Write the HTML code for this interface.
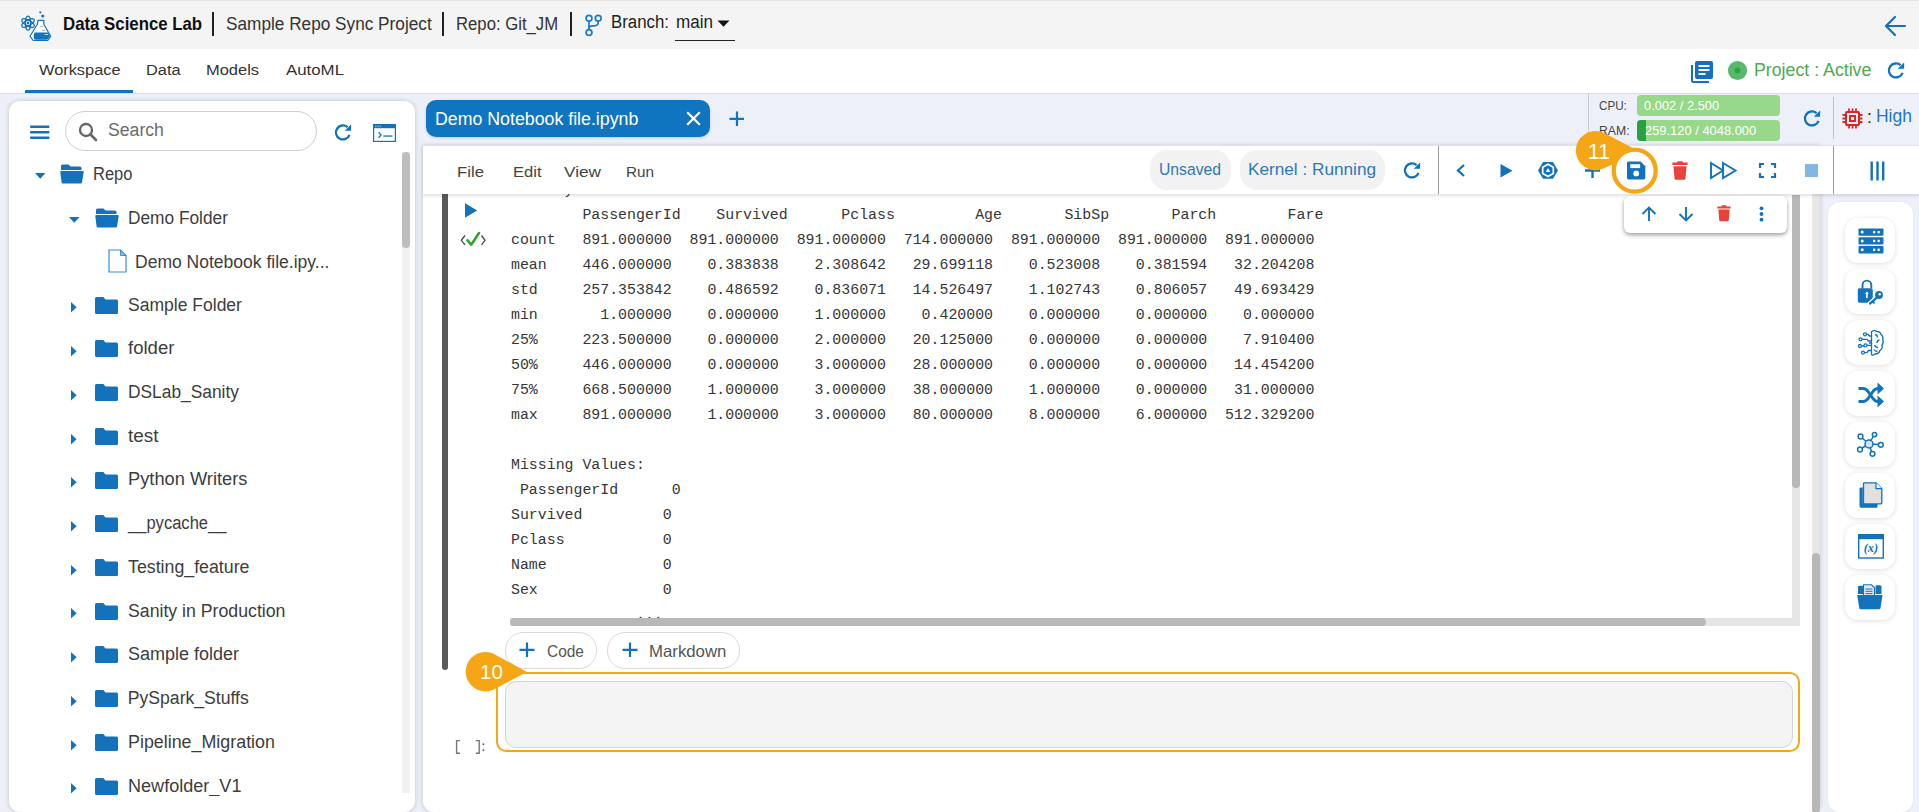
<!DOCTYPE html>
<html><head><meta charset="utf-8">
<style>
*{box-sizing:border-box;margin:0;padding:0}
html,body{width:1919px;height:812px;overflow:hidden;background:#edf0f8;font-family:"Liberation Sans",sans-serif;color:#222}
.a{position:absolute}
svg{display:block;position:absolute;overflow:visible}
.t{position:absolute;white-space:pre;line-height:1;transform-origin:0 0}
.mono{font-family:"Liberation Mono",monospace;color:#363636;white-space:pre;position:absolute;line-height:25px}
</style></head><body>
<div class="a" style="left:0px;top:0px;width:1919px;height:49px;background:#f4f4f4;border-top:1px solid #e4e4e4"></div>
<svg style="left:0;top:0" width="60" height="48" viewBox="0 0 60 48">
<g fill="none" stroke="#1272bb" stroke-width="1.25">
<ellipse cx="28" cy="23" rx="7" ry="2.7" transform="rotate(90 28 23)"/>
<ellipse cx="28" cy="23" rx="7" ry="2.7" transform="rotate(30 28 23)"/>
<ellipse cx="28" cy="23" rx="7" ry="2.7" transform="rotate(-30 28 23)"/>
</g>
<circle cx="28" cy="23" r="1.3" fill="#1272bb"/>
<path d="M38 20.3 H43.8 V24.2 L50.7 36.3 L47.8 40.5 H33.2 L30 36.3 L37.4 24.2 Z" fill="#fff" stroke="#1272bb" stroke-width="1.2" stroke-linejoin="round"/>
<path d="M34.6 32.4 H48 L50 36.3 L47.4 39.8 H34.6 Q32.8 37 34.6 32.4 Z" fill="#1272bb"/>
<path d="M40.5 26.5 H43 M42 30.3 H45" stroke="#8a8a8a" stroke-width="0.7"/><path d="M44.5 34.5 H48" stroke="#cfe3f5" stroke-width="0.9"/>
<circle cx="40.3" cy="12.3" r="1.1" fill="#1272bb"/><circle cx="42.8" cy="16" r="1.6" fill="#1272bb"/>
</svg>
<div class="t" style="left:63.0px;top:14.75px;font-size:18.02px;color:#111;font-weight:bold;transform:scaleX(0.9325);">Data Science Lab</div>
<div class="a" style="left:212px;top:12px;width:1.6px;height:24px;background:#222;"></div>
<div class="t" style="left:226.0px;top:14.75px;font-size:18.02px;color:#333;font-weight:normal;transform:scaleX(0.9553);">Sample Repo Sync Project</div>
<div class="a" style="left:442px;top:12px;width:1.6px;height:24px;background:#222;"></div>
<div class="t" style="left:455.5px;top:14.75px;font-size:18.02px;color:#333;font-weight:normal;transform:scaleX(0.9269);">Repo: Git_JM</div>
<div class="a" style="left:570px;top:12px;width:1.6px;height:24px;background:#222;"></div>
<svg style="left:584px;top:13px" width="20" height="26" viewBox="0 0 20 26">
<g fill="none" stroke="#1e7ac4" stroke-width="1.7">
<circle cx="5" cy="5.2" r="2.9"/><circle cx="14.2" cy="5.2" r="2.9"/><circle cx="5" cy="19.6" r="2.9"/>
<path d="M5 8.1 V16.7"/><path d="M14.2 8.1 V9.5 Q14.2 12.8 10.5 12.8 H8.5 Q5 12.8 5 16"/>
</g></svg>
<div class="t" style="left:611.0px;top:14.40px;font-size:17.60px;color:#222;font-weight:normal;transform:scaleX(0.9562);">Branch:</div>
<div class="t" style="left:675.5px;top:14.40px;font-size:17.60px;color:#222;font-weight:normal;transform:scaleX(0.9699);">main</div>
<svg style="left:717px;top:20px" width="13" height="7" viewBox="0 0 13 7"><path d="M0.5 0.5 H12.5 L6.5 6.8 Z" fill="#111"/></svg>
<div class="a" style="left:675px;top:39.5px;width:60px;height:1.6px;background:#222;"></div>
<svg style="left:1884px;top:15px" width="23" height="22" viewBox="0 0 23 22"><g fill="none" stroke="#1272bb" stroke-width="2.2" stroke-linecap="round" stroke-linejoin="round"><path d="M21 11 H2.5"/><path d="M11 2 L2 11 L11 20"/></g></svg>
<div class="a" style="left:0px;top:49px;width:1919px;height:45px;background:#fff;border-bottom:1px solid #dcdde4"></div>
<div class="t" style="left:38.6px;top:62.18px;font-size:15.50px;color:#333;font-weight:normal;transform:scaleX(1.0551);">Workspace</div>
<div class="t" style="left:145.8px;top:62.18px;font-size:15.50px;color:#333;font-weight:normal;transform:scaleX(1.0537);">Data</div>
<div class="t" style="left:206.4px;top:62.18px;font-size:15.50px;color:#333;font-weight:normal;transform:scaleX(1.0607);">Models</div>
<div class="t" style="left:285.8px;top:62.18px;font-size:15.50px;color:#333;font-weight:normal;transform:scaleX(1.0858);">AutoML</div>
<div class="a" style="left:25px;top:90px;width:108px;height:3px;background:#1272bb;"></div>
<svg style="left:1690px;top:60px" width="24" height="23" viewBox="0 0 24 23">
<path d="M2 5 V20.5 Q2 22 3.5 22 H19" fill="none" stroke="#1272bb" stroke-width="2"/>
<rect x="5" y="1" width="18" height="18" rx="2" fill="#1272bb"/>
<rect x="8.5" y="5" width="11" height="2" fill="#fff"/><rect x="8.5" y="9" width="11" height="2" fill="#fff"/><rect x="8.5" y="13" width="7" height="2" fill="#fff"/>
</svg>
<svg style="left:1727px;top:60px" width="21" height="21" viewBox="0 0 21 21"><circle cx="10.5" cy="10.5" r="9.6" fill="#58b86b"/><circle cx="10.5" cy="10.5" r="2.9" fill="#27a743"/></svg>
<div class="t" style="left:1754.0px;top:60.98px;font-size:18.58px;color:#4ea94f;font-weight:normal;transform:scaleX(0.9552);">Project : Active</div>
<svg style="left:1887px;top:62px" width="18" height="18" viewBox="0 0 18 18">
<path d="M15.54 10.8 A7 7 0 1 1 13.6 3.2" fill="none" stroke="#1272bb" stroke-width="2.3"/>
<path d="M17.1 0.6 V6.8 H10.8 Z" fill="#1272bb"/></svg>
<div class="a" style="left:9px;top:101px;width:406px;height:711px;background:#fff;border-radius:11px;box-shadow:0 0 4px 1px rgba(0,0,0,0.13)"></div>
<svg style="left:30px;top:125px" width="20" height="15" viewBox="0 0 20 15"><g fill="#1272bb"><rect x="0" y="0.5" width="19.5" height="2.6" rx="1"/><rect x="0" y="6" width="19.5" height="2.6" rx="1"/><rect x="0" y="11.5" width="19.5" height="2.6" rx="1"/></g></svg>
<div class="a" style="left:65px;top:111px;width:252px;height:40px;background:#fff;border:1px solid #cfcfcf;border-radius:20px"></div>
<svg style="left:78px;top:122px" width="20" height="20" viewBox="0 0 20 20"><circle cx="8" cy="8" r="6" fill="none" stroke="#666" stroke-width="2.3"/><path d="M12.5 12.5 L18 18" stroke="#666" stroke-width="2.6" stroke-linecap="round"/></svg>
<div class="t" style="left:107.7px;top:121.28px;font-size:18.58px;color:#6b6b6b;font-weight:normal;transform:scaleX(0.9503);">Search</div>
<svg style="left:334px;top:124px" width="18" height="18" viewBox="0 0 18 18">
<path d="M15.54 10.8 A7 7 0 1 1 13.6 3.2" fill="none" stroke="#1272bb" stroke-width="2.3"/>
<path d="M17.1 0.6 V6.8 H10.8 Z" fill="#1272bb"/></svg>
<svg style="left:373px;top:124px" width="23" height="18" viewBox="0 0 23 18">
<rect x="0.6" y="0.6" width="21.8" height="16.8" fill="none" stroke="#1272bb" stroke-width="1.2"/>
<rect x="0.6" y="0.6" width="21.8" height="3.6" fill="#1272bb"/>
<g fill="#8ec4f0"><rect x="2.2" y="1.7" width="1.2" height="1.4"/><rect x="4.4" y="1.7" width="1.2" height="1.4"/><rect x="6.6" y="1.7" width="1.2" height="1.4"/></g>
<path d="M5.6 8.2 L8 11 L5.6 13.8" fill="none" stroke="#1272bb" stroke-width="1.3"/><rect x="10.3" y="11.4" width="9.2" height="1.3" fill="#1272bb"/>
</svg>
<div class="a" style="left:402px;top:152px;width:8px;height:641px;background:#f1f1f1;"></div>
<div class="a" style="left:402px;top:152px;width:8px;height:96px;background:#bdbdbd;border-radius:4px"></div>
<svg style="left:34.5px;top:172.5px" width="11" height="6" viewBox="0 0 11 6"><path d="M0 0 H10.5 L5.25 5.8 Z" fill="#1272bb"/></svg>
<svg style="left:59.5px;top:164px" width="24" height="20" viewBox="0 0 24 20">
<path d="M1 2 Q1 0.5 2.5 0.5 H8.5 L10.5 2.5 H20 Q21.5 2.5 21.5 4 V6 H1 Z" fill="#1272bb"/>
<path d="M0.3 8 Q0.2 7 1.3 7 H22.7 Q23.8 7 23.7 8 L22 18.5 Q21.8 19.6 20.7 19.6 H2.8 Q1.7 19.6 1.6 18.5 Z" fill="#1272bb"/>
</svg>
<div class="t" style="left:93.3px;top:165.90px;font-size:17.60px;color:#3d3d3d;font-weight:normal;transform:scaleX(0.9387);">Repo</div>
<svg style="left:69px;top:216.5px" width="11" height="6" viewBox="0 0 11 6"><path d="M0 0 H10.5 L5.25 5.8 Z" fill="#1272bb"/></svg>
<svg style="left:94.5px;top:208px" width="24" height="20" viewBox="0 0 24 20">
<path d="M1 2 Q1 0.5 2.5 0.5 H8.5 L10.5 2.5 H20 Q21.5 2.5 21.5 4 V6 H1 Z" fill="#1272bb"/>
<path d="M0.3 8 Q0.2 7 1.3 7 H22.7 Q23.8 7 23.7 8 L22 18.5 Q21.8 19.6 20.7 19.6 H2.8 Q1.7 19.6 1.6 18.5 Z" fill="#1272bb"/>
</svg>
<div class="t" style="left:128.3px;top:209.90px;font-size:17.60px;color:#3d3d3d;font-weight:normal;transform:scaleX(0.9830);">Demo Folder</div>
<svg style="left:108px;top:249px" width="19" height="24" viewBox="0 0 19 24">
<path d="M1 1 H12.5 L18 6.5 V23 H1 Z" fill="#fff" stroke="#3a8fd6" stroke-width="1.2"/>
<path d="M12.5 1 V6.5 H18 Z" fill="#8cc0ec" stroke="#3a8fd6" stroke-width="1"/></svg>
<div class="t" style="left:134.7px;top:253.70px;font-size:17.60px;color:#3d3d3d;font-weight:normal;transform:scaleX(0.9957);">Demo Notebook file.ipy...</div>
<svg style="left:70.8px;top:302.4px" width="6" height="11" viewBox="0 0 6 11"><path d="M0 0 V10.5 L5.6 5.25 Z" fill="#1272bb"/></svg>
<svg style="left:94.8px;top:296.6px" width="23" height="17" viewBox="0 0 23 17">
<path d="M0 1.5 Q0 0 1.5 0 H8.3 L10.5 2.4 H21.5 Q23 2.4 23 3.9 V15.5 Q23 17 21.5 17 H1.5 Q0 17 0 15.5 Z" fill="#1272bb"/>
</svg>
<div class="t" style="left:127.8px;top:296.50px;font-size:17.60px;color:#3d3d3d;font-weight:normal;transform:scaleX(0.9960);">Sample Folder</div>
<svg style="left:70.8px;top:346.1272727272727px" width="6" height="11" viewBox="0 0 6 11"><path d="M0 0 V10.5 L5.6 5.25 Z" fill="#1272bb"/></svg>
<svg style="left:94.8px;top:340.32727272727277px" width="23" height="17" viewBox="0 0 23 17">
<path d="M0 1.5 Q0 0 1.5 0 H8.3 L10.5 2.4 H21.5 Q23 2.4 23 3.9 V15.5 Q23 17 21.5 17 H1.5 Q0 17 0 15.5 Z" fill="#1272bb"/>
</svg>
<div class="t" style="left:127.8px;top:340.23px;font-size:17.60px;color:#3d3d3d;font-weight:normal;transform:scaleX(1.0561);">folder</div>
<svg style="left:70.8px;top:389.8545454545454px" width="6" height="11" viewBox="0 0 6 11"><path d="M0 0 V10.5 L5.6 5.25 Z" fill="#1272bb"/></svg>
<svg style="left:94.8px;top:384.05454545454546px" width="23" height="17" viewBox="0 0 23 17">
<path d="M0 1.5 Q0 0 1.5 0 H8.3 L10.5 2.4 H21.5 Q23 2.4 23 3.9 V15.5 Q23 17 21.5 17 H1.5 Q0 17 0 15.5 Z" fill="#1272bb"/>
</svg>
<div class="t" style="left:127.8px;top:383.96px;font-size:17.60px;color:#3d3d3d;font-weight:normal;transform:scaleX(0.9864);">DSLab_Sanity</div>
<svg style="left:70.8px;top:433.58181818181816px" width="6" height="11" viewBox="0 0 6 11"><path d="M0 0 V10.5 L5.6 5.25 Z" fill="#1272bb"/></svg>
<svg style="left:94.8px;top:427.7818181818182px" width="23" height="17" viewBox="0 0 23 17">
<path d="M0 1.5 Q0 0 1.5 0 H8.3 L10.5 2.4 H21.5 Q23 2.4 23 3.9 V15.5 Q23 17 21.5 17 H1.5 Q0 17 0 15.5 Z" fill="#1272bb"/>
</svg>
<div class="t" style="left:127.8px;top:427.69px;font-size:17.60px;color:#3d3d3d;font-weight:normal;transform:scaleX(1.0751);">test</div>
<svg style="left:70.8px;top:477.30909090909086px" width="6" height="11" viewBox="0 0 6 11"><path d="M0 0 V10.5 L5.6 5.25 Z" fill="#1272bb"/></svg>
<svg style="left:94.8px;top:471.5090909090909px" width="23" height="17" viewBox="0 0 23 17">
<path d="M0 1.5 Q0 0 1.5 0 H8.3 L10.5 2.4 H21.5 Q23 2.4 23 3.9 V15.5 Q23 17 21.5 17 H1.5 Q0 17 0 15.5 Z" fill="#1272bb"/>
</svg>
<div class="t" style="left:127.8px;top:471.41px;font-size:17.60px;color:#3d3d3d;font-weight:normal;transform:scaleX(1.0383);">Python Writers</div>
<svg style="left:70.8px;top:521.0363636363636px" width="6" height="11" viewBox="0 0 6 11"><path d="M0 0 V10.5 L5.6 5.25 Z" fill="#1272bb"/></svg>
<svg style="left:94.8px;top:515.2363636363636px" width="23" height="17" viewBox="0 0 23 17">
<path d="M0 1.5 Q0 0 1.5 0 H8.3 L10.5 2.4 H21.5 Q23 2.4 23 3.9 V15.5 Q23 17 21.5 17 H1.5 Q0 17 0 15.5 Z" fill="#1272bb"/>
</svg>
<div class="t" style="left:127.8px;top:515.14px;font-size:17.60px;color:#3d3d3d;font-weight:normal;transform:scaleX(0.9407);">__pycache__</div>
<svg style="left:70.8px;top:564.7636363636364px" width="6" height="11" viewBox="0 0 6 11"><path d="M0 0 V10.5 L5.6 5.25 Z" fill="#1272bb"/></svg>
<svg style="left:94.8px;top:558.9636363636364px" width="23" height="17" viewBox="0 0 23 17">
<path d="M0 1.5 Q0 0 1.5 0 H8.3 L10.5 2.4 H21.5 Q23 2.4 23 3.9 V15.5 Q23 17 21.5 17 H1.5 Q0 17 0 15.5 Z" fill="#1272bb"/>
</svg>
<div class="t" style="left:127.8px;top:558.87px;font-size:17.60px;color:#3d3d3d;font-weight:normal;transform:scaleX(1.0095);">Testing_feature</div>
<svg style="left:70.8px;top:608.490909090909px" width="6" height="11" viewBox="0 0 6 11"><path d="M0 0 V10.5 L5.6 5.25 Z" fill="#1272bb"/></svg>
<svg style="left:94.8px;top:602.690909090909px" width="23" height="17" viewBox="0 0 23 17">
<path d="M0 1.5 Q0 0 1.5 0 H8.3 L10.5 2.4 H21.5 Q23 2.4 23 3.9 V15.5 Q23 17 21.5 17 H1.5 Q0 17 0 15.5 Z" fill="#1272bb"/>
</svg>
<div class="t" style="left:127.8px;top:602.59px;font-size:17.60px;color:#3d3d3d;font-weight:normal;transform:scaleX(1.0061);">Sanity in Production</div>
<svg style="left:70.8px;top:652.2181818181817px" width="6" height="11" viewBox="0 0 6 11"><path d="M0 0 V10.5 L5.6 5.25 Z" fill="#1272bb"/></svg>
<svg style="left:94.8px;top:646.4181818181818px" width="23" height="17" viewBox="0 0 23 17">
<path d="M0 1.5 Q0 0 1.5 0 H8.3 L10.5 2.4 H21.5 Q23 2.4 23 3.9 V15.5 Q23 17 21.5 17 H1.5 Q0 17 0 15.5 Z" fill="#1272bb"/>
</svg>
<div class="t" style="left:127.8px;top:646.32px;font-size:17.60px;color:#3d3d3d;font-weight:normal;transform:scaleX(1.0221);">Sample folder</div>
<svg style="left:70.8px;top:695.9454545454545px" width="6" height="11" viewBox="0 0 6 11"><path d="M0 0 V10.5 L5.6 5.25 Z" fill="#1272bb"/></svg>
<svg style="left:94.8px;top:690.1454545454545px" width="23" height="17" viewBox="0 0 23 17">
<path d="M0 1.5 Q0 0 1.5 0 H8.3 L10.5 2.4 H21.5 Q23 2.4 23 3.9 V15.5 Q23 17 21.5 17 H1.5 Q0 17 0 15.5 Z" fill="#1272bb"/>
</svg>
<div class="t" style="left:127.8px;top:690.05px;font-size:17.60px;color:#3d3d3d;font-weight:normal;">PySpark_Stuffs</div>
<svg style="left:70.8px;top:739.6727272727272px" width="6" height="11" viewBox="0 0 6 11"><path d="M0 0 V10.5 L5.6 5.25 Z" fill="#1272bb"/></svg>
<svg style="left:94.8px;top:733.8727272727273px" width="23" height="17" viewBox="0 0 23 17">
<path d="M0 1.5 Q0 0 1.5 0 H8.3 L10.5 2.4 H21.5 Q23 2.4 23 3.9 V15.5 Q23 17 21.5 17 H1.5 Q0 17 0 15.5 Z" fill="#1272bb"/>
</svg>
<div class="t" style="left:127.8px;top:733.78px;font-size:17.60px;color:#3d3d3d;font-weight:normal;transform:scaleX(1.0151);">Pipeline_Migration</div>
<svg style="left:70.8px;top:783.4px" width="6" height="11" viewBox="0 0 6 11"><path d="M0 0 V10.5 L5.6 5.25 Z" fill="#1272bb"/></svg>
<svg style="left:94.8px;top:777.6px" width="23" height="17" viewBox="0 0 23 17">
<path d="M0 1.5 Q0 0 1.5 0 H8.3 L10.5 2.4 H21.5 Q23 2.4 23 3.9 V15.5 Q23 17 21.5 17 H1.5 Q0 17 0 15.5 Z" fill="#1272bb"/>
</svg>
<div class="t" style="left:127.8px;top:777.50px;font-size:17.60px;color:#3d3d3d;font-weight:normal;transform:scaleX(1.0266);">Newfolder_V1</div>
<div class="a" style="left:20px;top:796px;width:380px;height:16px;background:#fff;"></div>
<div class="a" style="left:426px;top:100px;width:284px;height:37px;background:#1075c0;border-radius:10px;box-shadow:0 1px 3px rgba(0,0,0,0.15)"></div>
<div class="t" style="left:434.5px;top:110.28px;font-size:18.58px;color:#fff;font-weight:normal;transform:scaleX(0.9555);">Demo Notebook file.ipynb</div>
<svg style="left:686px;top:111px" width="15" height="15" viewBox="0 0 15 15"><path d="M1.2 1.2 L13.8 13.8 M13.8 1.2 L1.2 13.8" stroke="#fff" stroke-width="2.2"/></svg>
<svg style="left:729px;top:111px" width="16" height="16" viewBox="0 0 16 16"><path d="M8 0.5 V15 M0.5 7.8 H15" stroke="#1272bb" stroke-width="2.2"/></svg>
<div class="a" style="left:1588px;top:93px;width:1px;height:52px;background:#c9c9d2;"></div>
<div class="t" style="left:1599.3px;top:99.29px;font-size:13.13px;color:#444;font-weight:normal;transform:scaleX(0.8850);">CPU:</div>
<div class="a" style="left:1637px;top:95px;width:143px;height:21px;background:#98d88a;border-radius:4px"></div>
<div class="t" style="left:1644.0px;top:99.09px;font-size:13.13px;color:#fff;font-weight:normal;transform:scaleX(0.9806);">0.002 / 2.500</div>
<div class="t" style="left:1599.3px;top:123.89px;font-size:13.13px;color:#444;font-weight:normal;transform:scaleX(0.9313);">RAM:</div>
<div class="a" style="left:1637px;top:120px;width:143px;height:21px;background:#98d88a;border-radius:4px"></div>
<div class="a" style="left:1637px;top:120px;width:9px;height:21px;background:#27a243;border-radius:4px 0 0 4px"></div>
<div class="t" style="left:1645.0px;top:123.89px;font-size:13.13px;color:#fff;font-weight:normal;transform:scaleX(0.9831);">259.120 / 4048.000</div>
<svg style="left:1803px;top:110px" width="18" height="18" viewBox="0 0 18 18">
<path d="M15.54 10.8 A7 7 0 1 1 13.6 3.2" fill="none" stroke="#1272bb" stroke-width="2.3"/>
<path d="M17.1 0.6 V6.8 H10.8 Z" fill="#1272bb"/></svg>
<div class="a" style="left:1833px;top:97px;width:1px;height:42px;background:#bfbfc8;"></div>
<svg style="left:1842px;top:108px" width="21" height="21" viewBox="0 0 21 21">
<g fill="none" stroke="#e02424" stroke-width="2"><rect x="4" y="4" width="13" height="13" rx="1"/><rect x="8" y="8" width="5" height="5"/></g>
<g stroke="#e02424" stroke-width="1.8"><path d="M7 0.5V4M10.5 0.5V4M14 0.5V4M7 17V20.5M10.5 17V20.5M14 17V20.5M0.5 7H4M0.5 10.5H4M0.5 14H4M17 7H20.5M17 10.5H20.5M17 14H20.5"/></g></svg>
<div class="t" style="left:1867.0px;top:108.60px;font-size:17.60px;color:#222;font-weight:normal;">:</div>
<div class="t" style="left:1875.8px;top:108.37px;font-size:17.88px;color:#1e78c4;font-weight:normal;transform:scaleX(0.9779);">High</div>
<div class="a" style="left:423px;top:146px;width:1397px;height:666px;background:#fff;border-radius:0 0 11px 11px;box-shadow:0 0 4px 1px rgba(0,0,0,0.13)"></div>
<div class="a" style="left:423px;top:145px;width:1496px;height:49px;background:#fff;border-top:1px solid #e2e2e2;box-shadow:0 2px 3px rgba(0,0,0,0.12);z-index:1"></div>
<div style="position:absolute;left:0;top:0;z-index:2">
<div class="t" style="left:457.0px;top:164.38px;font-size:15.50px;color:#444;font-weight:normal;transform:scaleX(1.0810);">File</div>
<div class="t" style="left:512.5px;top:164.38px;font-size:15.50px;color:#444;font-weight:normal;transform:scaleX(1.0670);">Edit</div>
<div class="t" style="left:564.0px;top:164.38px;font-size:15.50px;color:#444;font-weight:normal;transform:scaleX(1.1105);">View</div>
<div class="t" style="left:625.5px;top:164.38px;font-size:15.50px;color:#444;font-weight:normal;transform:scaleX(0.9847);">Run</div>
<div class="a" style="left:1150px;top:150px;width:81px;height:40px;background:#f2f2f2;border-radius:17px"></div>
<div class="t" style="left:1159.0px;top:161.82px;font-size:15.92px;color:#2f77b8;font-weight:normal;transform:scaleX(0.9880);">Unsaved</div>
<div class="a" style="left:1240px;top:150px;width:145px;height:40px;background:#f2f2f2;border-radius:17px"></div>
<div class="t" style="left:1248.0px;top:161.82px;font-size:15.92px;color:#2f77b8;font-weight:normal;transform:scaleX(1.0807);">Kernel : Running</div>
<svg style="left:1403px;top:162px" width="18" height="18" viewBox="0 0 18 18">
<path d="M15.54 10.8 A7 7 0 1 1 13.6 3.2" fill="none" stroke="#1272bb" stroke-width="2.3"/>
<path d="M17.1 0.6 V6.8 H10.8 Z" fill="#1272bb"/></svg>
<div class="a" style="left:1438px;top:146px;width:1px;height:48px;background:#9a9a9a;"></div>
<svg style="left:1455px;top:164px" width="11" height="13" viewBox="0 0 11 13"><path d="M9 1 L3 6.5 L9 12" fill="none" stroke="#1272bb" stroke-width="2.3"/></svg>
<svg style="left:1500px;top:164px" width="13" height="14" viewBox="0 0 13 14"><path d="M0.5 0 V13.5 L12.5 6.75 Z" fill="#1272bb"/></svg>
<svg style="left:1537px;top:161px" width="22" height="19" viewBox="0 0 22 19"><path d="M1 9.4 L6 1 H16 L21 9.4 L16 17.7 H6 Z" fill="#1272bb"/><path d="M11 3.3 L16.3 6.35 V12.45 L11 15.5 L5.7 12.45 V6.35 Z" fill="none" stroke="#fff" stroke-width="1.7"/><path d="M11 7.6 Q11.6 7.6 12 8.4 L13.2 11 H8.8 L10 8.4 Q10.4 7.6 11 7.6 Z" fill="#fff"/></svg>
<svg style="left:1585px;top:163px" width="15" height="15" viewBox="0 0 15 15"><path d="M7.5 0 V15 M0 7.5 H15" stroke="#1272bb" stroke-width="2.4"/></svg>
<svg style="left:1627px;top:161px" width="19" height="19" viewBox="0 0 19 19"><path d="M0 2 Q0 0.3 1.7 0.3 H14 L18.5 4.8 V17 Q18.5 18.7 16.8 18.7 H1.7 Q0 18.7 0 17 Z" fill="#1272bb"/><rect x="3.5" y="2.8" width="10" height="4" fill="#fff"/><circle cx="9.3" cy="12.5" r="2.8" fill="#fff"/></svg>
<svg style="left:1671.5px;top:160.5px" width="16" height="19" viewBox="0 0 16 19"><path d="M5.5 0.3 H10.5 L11 1.6 H15.6 V4 H0.4 V1.6 H5 Z" fill="#e8433a"/><path d="M1.5 5.2 H14.5 L13.5 17.5 Q13.4 18.7 12.2 18.7 H3.8 Q2.6 18.7 2.5 17.5 Z" fill="#e8433a"/></svg>
<svg style="left:1710px;top:162px" width="27" height="17" viewBox="0 0 27 17"><g fill="none" stroke="#1272bb" stroke-width="1.9" stroke-linejoin="miter"><path d="M1 1 L13 8.5 L1 16 Z"/><path d="M13 1 L25.5 8.5 L13 16 Z"/></g></svg>
<svg style="left:1759px;top:163px" width="17" height="15" viewBox="0 0 17 15"><g fill="none" stroke="#1272bb" stroke-width="2.2"><path d="M1 5 V1 H5"/><path d="M12 1 H16 V5"/><path d="M16 10 V14 H12"/><path d="M5 14 H1 V10"/></g></svg>
<div class="a" style="left:1805px;top:164px;width:13px;height:13px;background:#83b6e0;"></div>
<div class="a" style="left:1833px;top:146px;width:1px;height:48px;background:#9a9a9a;"></div>
<svg style="left:1870px;top:161px" width="15" height="20" viewBox="0 0 15 20"><g fill="#1272bb"><rect x="0.5" y="0.5" width="2.4" height="19"/><rect x="6.3" y="0.5" width="2.4" height="19"/><rect x="12" y="0.5" width="2.4" height="19"/></g></svg>
</div>
<div class="a" style="left:442px;top:190px;width:6px;height:480px;background:#5a5a5a;border-radius:0 0 3px 3px"></div>
<svg style="left:465px;top:203px" width="13" height="15" viewBox="0 0 13 15"><path d="M0 0.3 V14.7 L12.2 7.5 Z" fill="#1272bb"/></svg>
<svg style="left:460px;top:231px" width="27" height="16" viewBox="0 0 27 16"><path d="M5 4.5 L1.3 9.3 L5 13.8 M21.5 4.5 L25 9.3 L21.5 13.8" fill="none" stroke="#444" stroke-width="1.3"/><path d="M7.5 9.3 L11.3 13.6 L19 2" fill="none" stroke="#2ba52b" stroke-width="2.6" stroke-linecap="round" stroke-linejoin="round"/></svg>
<div class="mono" style="left:511px;top:178.03px;font-size:14.884px;z-index:0;height:449px;overflow:hidden">Summary Statistics:
        PassengerId    Survived      Pclass         Age       SibSp       Parch        Fare
count   891.000000  891.000000  891.000000  714.000000  891.000000  891.000000  891.000000
mean    446.000000    0.383838    2.308642   29.699118    0.523008    0.381594   32.204208
std     257.353842    0.486592    0.836071   14.526497    1.102743    0.806057   49.693429
min       1.000000    0.000000    1.000000    0.420000    0.000000    0.000000    0.000000
25%     223.500000    0.000000    2.000000   20.125000    0.000000    0.000000    7.910400
50%     446.000000    0.000000    3.000000   28.000000    0.000000    0.000000   14.454200
75%     668.500000    1.000000    3.000000   38.000000    1.000000    0.000000   31.000000
max     891.000000    1.000000    3.000000   80.000000    8.000000    6.000000  512.329200

Missing Values:
 PassengerId      0
Survived         0
Pclass           0
Name             0
Sex              0
              ...</div>
<div class="a" style="left:1792px;top:195px;width:8px;height:431px;background:#e6e6e6;"></div>
<div class="a" style="left:1792px;top:195px;width:8px;height:293px;background:#b8b8b8;border-radius:0 0 4px 4px"></div>
<div class="a" style="left:510px;top:618px;width:1290px;height:8px;background:#e6e6e6;"></div>
<div class="a" style="left:510px;top:618px;width:1196px;height:8px;background:#b8b8b8;border-radius:4px"></div>
<div class="a" style="left:1624px;top:196px;width:163px;height:37px;background:#fff;border-radius:6px;box-shadow:0 2px 4px rgba(0,0,0,0.38);z-index:3"></div>
<div style="position:absolute;left:0;top:0;z-index:4">
<svg style="left:1641px;top:206px" width="16" height="16" viewBox="0 0 16 16"><path d="M8 15 V1.5 M1.5 8 L8 1.5 L14.5 8" fill="none" stroke="#1272bb" stroke-width="1.9"/></svg>
<svg style="left:1678px;top:206px" width="16" height="16" viewBox="0 0 16 16"><path d="M8 1 V14.5 M1.5 8 L8 14.5 L14.5 8" fill="none" stroke="#1272bb" stroke-width="1.9"/></svg>
<svg style="left:1717px;top:205px" width="14" height="16.5" viewBox="0 0 16 19"><path d="M5.5 0.3 H10.5 L11 1.6 H15.6 V4 H0.4 V1.6 H5 Z" fill="#e8433a"/><path d="M1.5 5.2 H14.5 L13.5 17.5 Q13.4 18.7 12.2 18.7 H3.8 Q2.6 18.7 2.5 17.5 Z" fill="#e8433a"/></svg>
<svg style="left:1759px;top:206px" width="5" height="16" viewBox="0 0 5 16"><g fill="#1272bb"><circle cx="2.5" cy="2.3" r="1.9"/><circle cx="2.5" cy="8" r="1.9"/><circle cx="2.5" cy="13.7" r="1.9"/></g></svg>
</div>
<div class="a" style="left:505px;top:632px;width:92px;height:37px;background:#fff;border:1px solid #d9d9d9;border-radius:18px"></div>
<svg style="left:519px;top:642px" width="16" height="16" viewBox="0 0 16 16"><path d="M8 0.5 V15 M0.5 7.8 H15.5" stroke="#1272bb" stroke-width="2.2"/></svg>
<div class="t" style="left:546.6px;top:642.65px;font-size:16.48px;color:#555;font-weight:normal;transform:scaleX(0.9380);">Code</div>
<div class="a" style="left:607px;top:632px;width:133px;height:37px;background:#fff;border:1px solid #d9d9d9;border-radius:18px"></div>
<svg style="left:622px;top:642px" width="16" height="16" viewBox="0 0 16 16"><path d="M8 0.5 V15 M0.5 7.8 H15.5" stroke="#1272bb" stroke-width="2.2"/></svg>
<div class="t" style="left:649.0px;top:642.65px;font-size:16.48px;color:#555;font-weight:normal;transform:scaleX(1.0182);">Markdown</div>
<div class="a" style="left:496px;top:672px;width:1304px;height:80px;background:#fff;border:2.5px solid #f2a716;border-radius:10px"></div>
<div class="a" style="left:505px;top:681px;width:1288px;height:67px;background:#f4f4f4;border:1px solid #d4d4d4;border-radius:11px"></div>
<svg style="left:450px;top:736px" width="40" height="22" viewBox="450 736 40 22"><path d="M460 740.6 H456.6 V753.2 H460 M475.8 740.6 H479.2 V753.2 H475.8" fill="none" stroke="#777" stroke-width="1.4"/><circle cx="483.4" cy="744.2" r="1" fill="#666"/><circle cx="483.4" cy="750.3" r="1" fill="#666"/></svg>
<div class="a" style="left:1812px;top:146px;width:8px;height:666px;background:#e8e8e8;"></div>
<div class="a" style="left:1812px;top:553px;width:8px;height:260px;background:#b8b8b8;border-radius:4px"></div>
<div class="a" style="left:1828px;top:202px;width:85px;height:610px;background:#fff;border-radius:12px;box-shadow:0 0 2px rgba(0,0,0,0.08)"></div>
<div class="a" style="left:1845px;top:218px;width:50px;height:45px;background:#fff;border-radius:13px;box-shadow:0 1px 5px rgba(0,0,0,0.13)"></div>
<div class="a" style="left:1845px;top:269px;width:50px;height:45px;background:#fff;border-radius:13px;box-shadow:0 1px 5px rgba(0,0,0,0.13)"></div>
<div class="a" style="left:1845px;top:320px;width:50px;height:45px;background:#fff;border-radius:13px;box-shadow:0 1px 5px rgba(0,0,0,0.13)"></div>
<div class="a" style="left:1845px;top:371px;width:50px;height:45px;background:#fff;border-radius:13px;box-shadow:0 1px 5px rgba(0,0,0,0.13)"></div>
<div class="a" style="left:1845px;top:422px;width:50px;height:45px;background:#fff;border-radius:13px;box-shadow:0 1px 5px rgba(0,0,0,0.13)"></div>
<div class="a" style="left:1845px;top:473px;width:50px;height:45px;background:#fff;border-radius:13px;box-shadow:0 1px 5px rgba(0,0,0,0.13)"></div>
<div class="a" style="left:1845px;top:524px;width:50px;height:45px;background:#fff;border-radius:13px;box-shadow:0 1px 5px rgba(0,0,0,0.13)"></div>
<div class="a" style="left:1845px;top:575px;width:50px;height:45px;background:#fff;border-radius:13px;box-shadow:0 1px 5px rgba(0,0,0,0.13)"></div>
<svg style="left:1858px;top:228px" width="26" height="26" viewBox="0 0 26 26"><g fill="#1272bb"><rect x="0.5" y="0.5" width="25" height="7.3" rx="0.8"/><rect x="0.5" y="9.3" width="25" height="7.3" rx="0.8"/><rect x="0.5" y="18.1" width="25" height="7.3" rx="0.8"/></g><g fill="#fff"><circle cx="4.2" cy="4.1" r="1.5"/><circle cx="4.2" cy="12.9" r="1.5"/><circle cx="4.2" cy="21.7" r="1.5"/><rect x="15" y="3" width="2.3" height="2.3"/><rect x="19.5" y="3" width="2.3" height="2.3"/><rect x="15" y="11.8" width="2.3" height="2.3"/><rect x="19.5" y="11.8" width="2.3" height="2.3"/><rect x="15" y="20.6" width="2.3" height="2.3"/><rect x="19.5" y="20.6" width="2.3" height="2.3"/></g></svg>
<svg style="left:1857px;top:279px" width="27" height="26" viewBox="0 0 27 26"><path d="M5.5 9.5 V6 A4.4 4.4 0 0 1 14.3 6 V9.5" fill="none" stroke="#1272bb" stroke-width="1.9"/><rect x="0.8" y="9.3" width="15" height="14.4" rx="1.6" fill="#1272bb"/><path d="M9.9 12.6 L11.9 15 H10.7 V19 H9.1 V15 H7.9 Z" fill="#fff"/><path d="M19.8 18.6 L12.6 25.2" stroke="#fff" stroke-width="5" stroke-linecap="round"/><circle cx="22" cy="16" r="5.6" fill="#fff"/><circle cx="22" cy="16" r="3.9" fill="#1272bb"/><circle cx="22.7" cy="15.2" r="1.2" fill="#fff"/><path d="M19.8 18.6 L13 24.6 M15.5 22.3 L16.9 23.6" stroke="#1272bb" stroke-width="2.2" stroke-linecap="round"/></svg>
<svg style="left:1857px;top:329px" width="27" height="27" viewBox="0 0 27 27"><g fill="none" stroke="#1272bb" stroke-width="1.3"><path d="M14.5 2.5 Q17 0.8 20 2.3 Q23.5 2.5 24 5.5 Q26.5 7 25.8 10.5 Q27 13.5 25 16 Q26 19.5 23 21.5 Q22 25 18 25 Q16 27 14.5 25.5 Z"/><path d="M18 5.5 Q20.5 6 20.5 8.5 M22.5 11 Q20 11.5 20 14 M17.5 16 Q18.5 18.5 21 18.5 M17 20.5 Q18 22.5 20.5 22.5"/><path d="M9.5 5.3 H11 L12.5 7 H14.5 M5 10.3 H10 L11.5 12 H14.5 M4.5 17 H7 M10 16.4 H14.5 M7.5 23.6 H10 L11.5 21.5 H14.5 M12 14 H14.5"/><circle cx="8" cy="5.3" r="1.5"/><circle cx="3.5" cy="10.3" r="1.5"/><circle cx="3" cy="17" r="1.5"/><circle cx="8.5" cy="16.4" r="1.5"/><circle cx="6" cy="23.6" r="1.5"/></g></svg>
<svg style="left:1858px;top:382px" width="26" height="26" viewBox="0 0 26 26"><g fill="none" stroke="#1272bb" stroke-width="3"><path d="M0.5 6.5 H5 Q8 6.5 10 9.5 L15 16.5 Q17 19.5 20 19.5 H21"/><path d="M0.5 19.5 H5 Q8 19.5 10 16.5 L15 9.5 Q17 6.5 20 6.5 H21"/></g><path d="M19.5 0.5 L26 6.5 L19.5 12.5 Z" fill="#1272bb"/><path d="M19.5 13.5 L26 19.5 L19.5 25.5 Z" fill="#1272bb"/></svg>
<svg style="left:1857px;top:432px" width="27" height="25" viewBox="0 0 27 25"><g stroke="#1272bb" stroke-width="1.5" fill="none"><path d="M12 12 L4 5 M12 12 L3.5 17 M12 12 L17 3 M12 12 L23 12.5 M12 12 L15 21"/></g><circle cx="12" cy="12" r="4" fill="#d4e6f5" stroke="#1272bb" stroke-width="1.5"/><g fill="#fff" stroke="#1272bb" stroke-width="1.5"><circle cx="3.5" cy="4.5" r="2.4"/><circle cx="3" cy="17.5" r="2.4"/><circle cx="17.5" cy="2.6" r="2.2"/><circle cx="23.8" cy="12.8" r="2.4"/><circle cx="15.5" cy="21.8" r="2.4"/></g></svg>
<svg style="left:1859px;top:482px" width="24" height="27" viewBox="0 0 24 27"><path d="M1.5 5.5 Q0.5 5.5 0.5 6.5 V24 Q0.5 25.8 2.3 25.8 H17.5 Q18.5 25.8 18.5 24.8 V22 H5 Q3.8 22 3.8 20.8 V5.5 Z" fill="#1272bb"/><path d="M4.5 1.5 Q4.5 0.8 5.3 0.8 H17 L22.8 6.6 V21 Q22.8 21.8 22 21.8 H5.3 Q4.5 21.8 4.5 21 Z" fill="#e0e0e0" stroke="#1272bb" stroke-width="1.3"/><path d="M17 0.8 V6.6 H22.8" fill="#fff" stroke="#1272bb" stroke-width="1.2"/></svg>
<svg style="left:1858px;top:534px" width="26" height="25" viewBox="0 0 26 25"><rect x="0.7" y="0.7" width="24.6" height="23.3" fill="#fff" stroke="#1272bb" stroke-width="1.4"/><rect x="0.7" y="0.7" width="24.6" height="4.5" fill="#1272bb"/><text x="13" y="18.3" text-anchor="middle" font-family="Liberation Serif" font-style="italic" font-weight="bold" font-size="12.5" fill="#1272bb">(x)</text></svg>
<svg style="left:1857px;top:584px" width="26" height="26" viewBox="0 0 26 26"><path d="M1 3 Q1 1.8 2.2 1.8 H6.5 Q7.5 1.8 7.5 3 V10 H1 Z" fill="#1272bb"/><path d="M18.5 2.5 Q18.5 1.2 19.8 1.2 H23 Q24.5 1.2 24.5 2.7 V10 H18.5 Z" fill="#1272bb"/><path d="M6.5 0.8 H14.5 L17.5 3.8 V12 H6.5 Z" fill="#e8e8e8" stroke="#1272bb" stroke-width="1.1"/><path d="M8.5 5 H15.5 M8.5 7.3 H15.5 M8.5 9.6 H15.5" stroke="#1272bb" stroke-width="1"/><path d="M0.2 11 H25.5 L23.5 24 Q23.3 25.2 22 25.2 H3.8 Q2.5 25.2 2.3 24 Z" fill="#1272bb"/></svg>
<div style="position:absolute;left:0;top:0;z-index:10">
<svg style="left:0;top:0" width="1919" height="812" viewBox="0 0 1919 812"><path d="M1604.58 133.23 L1640.5 152 L1603.48 168.50 A19.6 19.6 0 1 1 1604.58 133.23 Z" fill="#f4a614"/><circle cx="1634.7" cy="170.7" r="21" fill="#fff" stroke="#f4a614" stroke-width="4.3"/><path d="M1627 163 Q1627 161.6 1628.4 161.6 H1640.6 L1645.3 166.3 V178 Q1645.3 179.4 1643.9 179.4 H1628.4 Q1627 179.4 1627 178 Z" fill="#1272bb"/><rect x="1630.3" y="164.2" width="9.8" height="3.9" fill="#fff"/><circle cx="1636.2" cy="173.4" r="2.9" fill="#fff"/><text x="1598.9" y="158.7" text-anchor="middle" font-family="Liberation Sans" font-size="21.5" fill="#fff">11</text><path d="M494.85 654.42 L527 672 L494.60 689.12 A19.7 19.7 0 1 1 494.85 654.42 Z" fill="#f4a614"/><text x="491.4" y="678.5" text-anchor="middle" font-family="Liberation Sans" font-size="20.5" fill="#fff">10</text></svg>
</div>
</body></html>
